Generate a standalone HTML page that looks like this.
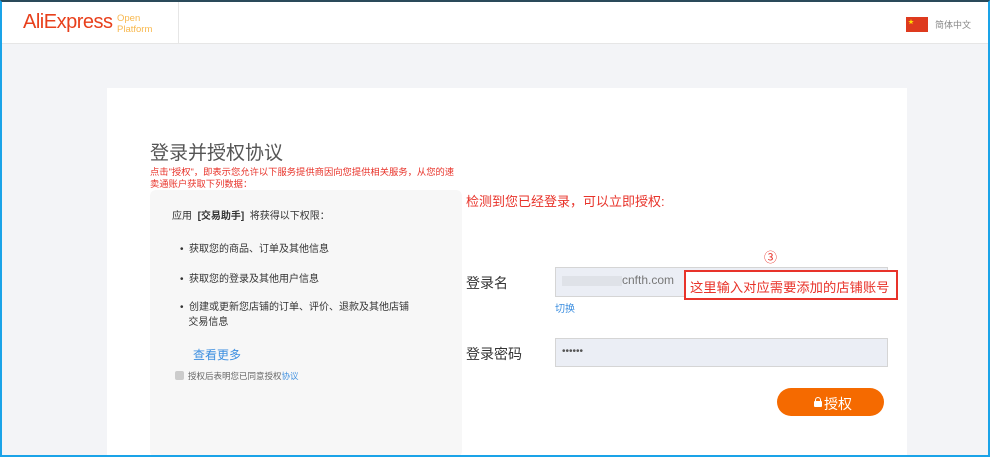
<!DOCTYPE html>
<html><head><meta charset="utf-8"><style>
*{margin:0;padding:0;box-sizing:border-box}
html,body{width:990px;height:457px;overflow:hidden}
body{background:#f3f4f7;font-family:"Liberation Sans","Noto Sans CJK SC",sans-serif;position:relative}
.abs{position:absolute}
.frame{position:absolute;left:0;top:0;width:990px;height:457px;border:2px solid #1aa3e8;border-top:2px solid #2a4a5a;pointer-events:none;z-index:10}
.hdr{left:0;top:0;width:990px;height:44px;background:#fff;border-bottom:1px solid #e6e6e6}
.card{left:107px;top:88px;width:800px;height:369px;background:#fff}
.lp{left:150px;top:190px;width:312px;height:267px;background:#f7f7f7;border-radius:6px}
.inp{background:#ebeef5;border:1px solid #d5d5d5}
</style></head><body>
<div class="abs hdr"></div>
<div class="abs" style="left:23px;top:11px;font-size:20px;color:#e8401c;letter-spacing:-0.5px">AliExpress</div>
<div class="abs" style="left:117px;top:13px;font-size:9.5px;line-height:11px;color:#f8b84e">Open<br>Platform</div>
<div class="abs" style="left:178px;top:2px;width:1px;height:42px;background:#e6e6e6"></div>
<div class="abs" style="left:906px;top:17px;width:22px;height:15px;background:#de3a1e"><span style="position:absolute;left:2px;top:0px;color:#ffde00;font-size:6px">★</span></div>
<div class="abs" style="left:935px;top:18px;font-size:9px;color:#888">简体中文</div>
<div class="abs card"></div>
<div class="abs" style="left:150px;top:138px;font-size:19px;color:#555">登录并授权协议</div>
<div class="abs" style="left:150px;top:166px;width:312px;font-size:9.3px;line-height:12px;color:#e8332a;word-break:break-all">点击"授权"，即表示您允许以下服务提供商因向您提供相关服务，从您的速卖通账户获取下列数据：</div>
<div class="abs lp"></div>
<div class="abs" style="left:172px;top:207px;font-size:10px;color:#333">应用 &nbsp;<b>[交易助手]</b> &nbsp;将获得以下权限：</div>
<div class="abs" style="left:180px;top:240px;font-size:10px;color:#333">•&nbsp; 获取您的商品、订单及其他信息</div>
<div class="abs" style="left:180px;top:270px;font-size:10px;color:#333">•&nbsp; 获取您的登录及其他用户信息</div>
<div class="abs" style="left:180px;top:300px;font-size:10px;line-height:15px;color:#333">•&nbsp; 创建或更新您店铺的订单、评价、退款及其他店铺<br>&nbsp;&nbsp;&nbsp;交易信息</div>
<div class="abs" style="left:193px;top:346px;font-size:12px;color:#3d8fe0">查看更多</div>
<div class="abs" style="left:175px;top:371px;width:9px;height:9px;background:#ccc;border-radius:2px"></div>
<div class="abs" style="left:188px;top:370px;font-size:8.5px;color:#666">授权后表明您已同意授权<span style="color:#3d8fe0">协议</span></div>
<div class="abs" style="left:466px;top:191px;font-size:13px;color:#e8332a">检测到您已经登录，可以立即授权:</div>
<div class="abs" style="left:466px;top:273px;font-size:14px;color:#333">登录名</div>
<div class="abs" style="left:466px;top:344px;font-size:14px;color:#333">登录密码</div>
<div class="abs inp" style="left:555px;top:267px;width:333px;height:30px"></div>
<div class="abs" style="left:562px;top:276px;width:60px;height:10px;background:#dfe2e8"></div>
<div class="abs" style="left:622px;top:273px;font-size:12px;color:#777">cnfth.com</div>
<div class="abs" style="left:555px;top:300px;font-size:10px;color:#3d8fe0">切换</div>
<div class="abs inp" style="left:555px;top:338px;width:333px;height:29px"></div>
<div class="abs" style="left:562px;top:346px;font-size:10px;color:#555">••••••</div>
<div class="abs" style="left:684px;top:270px;width:214px;height:30px;border:2px solid #e8332a;background:#fff"></div>
<div class="abs" style="left:690px;top:277px;font-size:13.3px;color:#e8332a;white-space:nowrap">这里输入对应需要添加的店铺账号</div>
<div class="abs" style="left:764px;top:247px;font-size:13px;color:#e8332a">③</div>
<div class="abs" style="left:777px;top:388px;width:107px;height:28px;background:#f56a00;border-radius:14px"></div>
<div class="abs" style="left:814px;top:397px;width:8px;height:10px">
 <div class="abs" style="left:1px;top:0;width:6px;height:6px;border:1.5px solid #fff;border-radius:3px 3px 0 0"></div>
 <div class="abs" style="left:0;top:4px;width:8px;height:6px;background:#fff;border-radius:1px"></div>
</div>
<div class="abs" style="left:824px;top:394px;font-size:14px;color:#fff">授权</div>
<div class="frame"></div>
</body></html>
